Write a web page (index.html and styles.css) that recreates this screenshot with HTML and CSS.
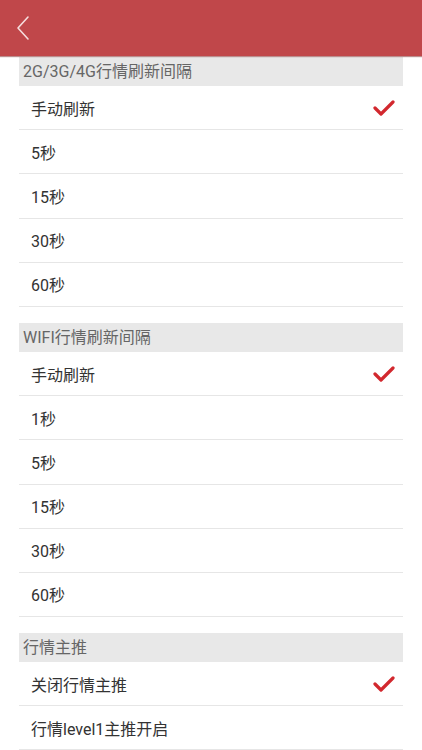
FILE: index.html
```html
<!DOCTYPE html>
<html lang="zh-CN">
<head>
<meta charset="utf-8">
<title>行情刷新设置</title>
<link rel="stylesheet" href="styles.css">
</head>
<body>
<header class="nav">
  <svg class="back" width="16" height="26" viewBox="0 0 16 26"><path d="M13 2 L3 13 L13 24" fill="none" stroke="#f6dede" stroke-width="1.6" stroke-linecap="round" stroke-linejoin="round"/></svg>
</header>
<main class="content">
  <section class="group">
    <div class="group-title">2G/3G/4G行情刷新间隔</div>
    <div class="row"><span>手动刷新</span><svg class="check" width="22" height="18" viewBox="0 0 22 18"><path d="M2 9 L8 15 L20 3" fill="none" stroke="#d2282e" stroke-width="3.2" stroke-linecap="round" stroke-linejoin="round"/></svg></div>
    <div class="row"><span>5秒</span></div>
    <div class="row"><span>15秒</span></div>
    <div class="row"><span>30秒</span></div>
    <div class="row"><span>60秒</span></div>
  </section>
  <section class="group">
    <div class="group-title">WIFI行情刷新间隔</div>
    <div class="row"><span>手动刷新</span><svg class="check" width="22" height="18" viewBox="0 0 22 18"><path d="M2 9 L8 15 L20 3" fill="none" stroke="#d2282e" stroke-width="3.2" stroke-linecap="round" stroke-linejoin="round"/></svg></div>
    <div class="row"><span>1秒</span></div>
    <div class="row"><span>5秒</span></div>
    <div class="row"><span>15秒</span></div>
    <div class="row"><span>30秒</span></div>
    <div class="row"><span>60秒</span></div>
  </section>
  <section class="group">
    <div class="group-title">行情主推</div>
    <div class="row"><span>关闭行情主推</span><svg class="check" width="22" height="18" viewBox="0 0 22 18"><path d="M2 9 L8 15 L20 3" fill="none" stroke="#d2282e" stroke-width="3.2" stroke-linecap="round" stroke-linejoin="round"/></svg></div>
    <div class="row"><span>行情level1主推开启</span></div>
  </section>
</main>
</body>
</html>
```
FILE: styles.css
```css
html, body {
  margin: 0;
  padding: 0;
  background: #ffffff;
  height: 750px;
  overflow: hidden;
}
body {
  font-family: Roboto, "Noto Sans CJK SC", sans-serif;
}
.nav {
  height: 56px;
  background: #c0474a;
  box-shadow: 0 1px 1px rgba(120, 30, 30, 0.5);
  display: flex;
  align-items: center;
  padding-left: 15px;
  position: relative;
  z-index: 1;
}
.back {
  display: block;
  margin-top: -1px;
}
.content {
  padding: 1px 19px 0 19px;
  display: flex;
  flex-direction: column;
  gap: 16px;
}
.group {
  display: flex;
  flex-direction: column;
}
.group-title {
  height: 29px;
  background: #e8e8e8;
  color: #666666;
  font-size: 16px;
  line-height: 29px;
  padding-left: 4px;
}
.row {
  height: 43.2px;
  border-bottom: 1px solid #e6e6e6;
  display: flex;
  align-items: center;
  justify-content: space-between;
  padding: 0 8px 0 12px;
  font-size: 16px;
  color: #333333;
}
.check {
  display: block;
}
```
